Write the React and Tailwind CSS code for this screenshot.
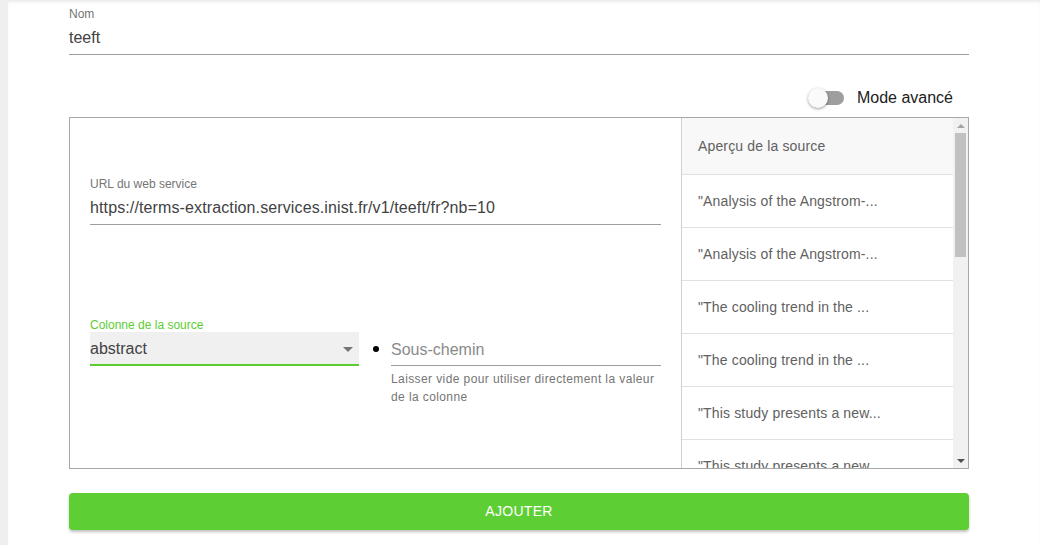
const rows = [
    "\"Analysis of the Angstrom-...",
    "\"Analysis of the Angstrom-...",
    "\"The cooling trend in the ...",
    "\"The cooling trend in the ...",
    "\"This study presents a new...",
    "\"This study presents a new...",
];

function Toggle() {
    return (
        <div className="relative w-[36px] h-[20px] flex items-center">
            <div className="w-[34px] h-[14px] rounded-full bg-[#9e9e9e] ml-[2px]" />
            <div className="absolute left-0 top-0 w-[20px] h-[20px] rounded-full bg-[#fafafa] shadow-[0_1px_3px_rgba(0,0,0,0.4)]" />
        </div>
    );
}

function Preview() {
    return (
        <div className="w-[287px] border-l border-[#d0d0d0] flex h-full overflow-hidden">
            <div className="flex-1 overflow-hidden">
                <div className="h-[57px] bg-[#f8f8f8] border-b border-[#e0e0e0] flex items-center pl-[16px] text-[14px] tracking-[0.15px] text-[#616161]">
                    Aperçu de la source
                </div>
                {rows.map((r, i) => (
                    <div
                        key={i}
                        className="h-[53px] border-b border-[#e0e0e0] flex items-center pl-[16px] text-[14px] tracking-[0.15px] text-[#616161] whitespace-nowrap"
                    >
                        {r}
                    </div>
                ))}
            </div>
            <div className="w-[15px] bg-[#f1f1f1] flex flex-col items-center">
                <div className="h-[15px] flex items-center justify-center">
                    <div className="w-0 h-0 border-l-[4px] border-r-[4px] border-b-[4px] border-l-transparent border-r-transparent border-b-[#a3a3a3]" />
                </div>
                <div className="w-[11px] h-[124px] bg-[#c1c1c1]" />
                <div className="flex-1" />
                <div className="h-[15px] flex items-center justify-center">
                    <div className="w-0 h-0 border-l-[4px] border-r-[4px] border-t-[4px] border-l-transparent border-r-transparent border-t-[#505050]" />
                </div>
            </div>
        </div>
    );
}

export default function App() {
    return (
        <div className="w-[1040px] h-[545px] flex bg-white overflow-hidden font-['Liberation_Sans',Arial,sans-serif]">
            <div className="w-[8px] bg-[#efefef]" />
            <div className="flex-1 relative shadow-[inset_0_3px_4px_-2px_rgba(0,0,0,0.12)]">
                <div className="ml-[61px] w-[900px] pt-[7px]">
                    {/* Nom */}
                    <div className="text-[12px] text-[#757575] leading-[14px]">Nom</div>
                    <div className="mt-[7px] pb-[6px] border-b border-[#9e9e9e] text-[16px] leading-[20px] text-[#424242]">
                        teeft
                    </div>

                    <div className="flex justify-end items-center gap-[13px] mt-[32px] pr-[16px] h-[22px]">
                        <Toggle />
                        <span className="text-[16px] text-[#212121]">Mode avancé</span>
                    </div>

                    {/* main box */}
                    <div className="mt-[8px] h-[352px] border border-[#a8a8a8] flex">
                        <div className="flex-1 pl-[20px] pr-[20px]">
                            <div className="mt-[59px] text-[12px] text-[#757575] leading-[14px]">URL du web service</div>
                            <div className="mt-[7px] pb-[6px] border-b border-[#9e9e9e] text-[16px] leading-[20px] tracking-[0.12px] text-[#424242]">
                                https://terms-extraction.services.inist.fr/v1/teeft/fr?nb=10
                            </div>

                            <div className="mt-[93px] text-[12px] text-[#5bcd32] leading-[14px]">Colonne de la source</div>
                            <div className="flex">
                                <div className="w-[269px]">
                                    <div className="h-[34px] pt-[2px] bg-[#f0f0f0] border-b-2 border-[#5bcd32] flex items-center justify-between pr-[6px] text-[16px] text-[#424242]">
                                        <span>abstract</span>
                                        <span className="w-0 h-0 border-l-[5px] border-r-[5px] border-t-[5px] border-l-transparent border-r-transparent border-t-[#757575]" />
                                    </div>
                                </div>
                                <div className="flex-1 flex ml-[12px]">
                                    <div className="w-[20px] pt-[14px]">
                                        <div className="w-[6px] h-[6px] rounded-full bg-black ml-[2px]" />
                                    </div>
                                    <div className="flex-1">
                                        <div className="h-[34px] pt-[2px] border-b border-[#9e9e9e] flex items-center text-[16px] text-[#8a8a8a]">
                                            Sous-chemin
                                        </div>
                                        <div className="mt-[4px] text-[12px] tracking-[0.4px] text-[#757575] leading-[18px]">
                                            Laisser vide pour utiliser directement la valeur de la colonne
                                        </div>
                                    </div>
                                </div>
                            </div>
                        </div>
                        <Preview />
                    </div>

                    <button className="mt-[24px] w-full h-[37px] rounded-[4px] bg-[#5ece35] text-white text-[14px] tracking-[0.3px] shadow-[0_2px_3px_rgba(0,0,0,0.25)]">
                        AJOUTER
                    </button>
                </div>
            </div>
        </div>
    );
}
